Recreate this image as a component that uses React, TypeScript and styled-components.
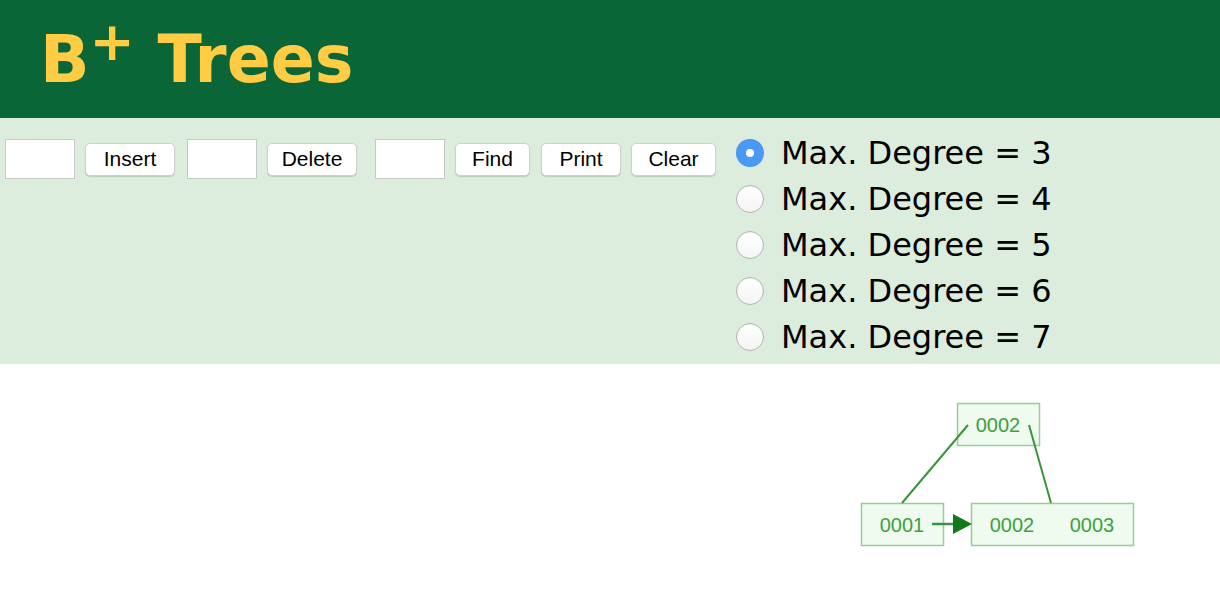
import React, { useState } from 'react';
import styled, { createGlobalStyle } from 'styled-components';

const GlobalStyle = createGlobalStyle`
    html, body {
        margin: 0;
        padding: 0;
        background: #ffffff;
    }
`;

const Page = styled.div`
    width: 1220px;
    font-family: 'DejaVu Sans', Verdana, sans-serif;
`;

const Header = styled.header`
    height: 118px;
    background: #0a6637;
    display: flex;
    align-items: center;
    padding-left: 40px;
`;

const Title = styled.h1`
    margin: 0;
    font-family: 'DejaVu Sans', Verdana, sans-serif;
    font-weight: bold;
    font-size: 65px;
    line-height: 1;
    color: #ffcc44;
    sup {
        font-size: 54px;
        line-height: 0;
        vertical-align: 22px;
    }
`;

const Panel = styled.section`
    background: #ddeddd;
    height: 246px;
    display: flex;
    align-items: flex-start;
    padding-left: 5px;
`;

const Controls = styled.div`
    display: flex;
    align-items: center;
    margin-top: 21px;
`;

const Field = styled.input`
    box-sizing: border-box;
    width: 70px;
    height: 40px;
    border: 1px solid #c8c8c8;
    background: #fff;
    margin: 0 10px 0 0;
    padding: 0 4px;
    outline: none;
`;

const Button = styled.button<{ $width: number; $gap?: number }>`
    box-sizing: border-box;
    width: ${(p) => p.$width}px;
    height: 33px;
    padding: 0;
    margin: 0 ${(p) => p.$gap ?? 10}px 0 0;
    background: #fff;
    border: 1px solid #cfcfcf;
    border-radius: 5px;
    box-shadow: 0 1px 1px rgba(0, 0, 0, 0.15);
    font-family: 'Liberation Sans', Arial, sans-serif;
    font-size: 21px;
    color: #000;
    cursor: pointer;
`;

const Degrees = styled.div`
    display: flex;
    flex-direction: column;
    margin-left: 20px;
    margin-top: 12px;
`;

const DegreeRow = styled.label`
    display: flex;
    align-items: center;
    height: 46px;
    font-family: 'DejaVu Sans', Verdana, sans-serif;
    font-size: 32px;
    color: #000;
    cursor: pointer;
`;

const Radio = styled.input`
    appearance: none;
    box-sizing: border-box;
    width: 28px;
    height: 28px;
    margin: 0 17px 0 0;
    border-radius: 50%;
    border: 1px solid #b4b4b4;
    background: linear-gradient(#ffffff, #f4f4f4);
    box-shadow: inset 0 1px 1px rgba(0, 0, 0, 0.05);
    position: relative;
    cursor: pointer;
    &:checked {
        border: none;
        background: #4a9af5;
    }
    &:checked::after {
        content: '';
        position: absolute;
        left: 10px;
        top: 10px;
        width: 8px;
        height: 8px;
        border-radius: 50%;
        background: #fff;
    }
`;

const Canvas = styled.svg`
    display: block;
    width: 1220px;
    height: 238px;
`;

const NODE_FILL = '#eefbee';
const NODE_STROKE = '#99cc99';
const TEXT_GREEN = '#3f9f3f';
const EDGE = '#3a943a';

const TreeNode = ({ x, y, w, keys }: { x: number; y: number; w: number; keys: { x: number; k: string }[] }) => (
    <g>
        <rect x={x + 0.5} y={y + 0.5} width={w} height={42} fill={NODE_FILL} stroke={NODE_STROKE} strokeWidth={1.5} />
        {keys.map((item) => (
            <text
                key={item.k + item.x}
                x={item.x}
                y={y + 29}
                textAnchor="middle"
                fontFamily="'Liberation Sans', Arial, sans-serif"
                fontSize={20}
                fill={TEXT_GREEN}
            >
                {item.k}
            </text>
        ))}
    </g>
);

const App = () => {
    const [degree, setDegree] = useState(3);
    return (
        <Page>
            <GlobalStyle />
            <Header>
                <Title>
                    B<sup>+</sup> Trees
                </Title>
            </Header>
            <Panel>
                <Controls>
                    <Field type="text" />
                    <Button $width={90} $gap={12}>Insert</Button>
                    <Field type="text" />
                    <Button $width={90} $gap={18}>Delete</Button>
                    <Field type="text" />
                    <Button $width={75} $gap={11}>Find</Button>
                    <Button $width={80}>Print</Button>
                    <Button $width={85} $gap={0}>Clear</Button>
                </Controls>
                <Degrees>
                    {[3, 4, 5, 6, 7].map((d) => (
                        <DegreeRow key={d}>
                            <Radio type="radio" name="degree" checked={degree === d} onChange={() => setDegree(d)} />
                            Max. Degree = {d}
                        </DegreeRow>
                    ))}
                </Degrees>
            </Panel>
            <Canvas viewBox="0 0 1220 238">
                <TreeNode x={957} y={39} w={82} keys={[{ x: 998, k: '0002' }]} />
                <TreeNode x={861} y={139} w={82} keys={[{ x: 902, k: '0001' }]} />
                <TreeNode
                    x={971}
                    y={139}
                    w={162}
                    keys={[
                        { x: 1012, k: '0002' },
                        { x: 1092, k: '0003' },
                    ]}
                />
                <line x1={968} y1={61} x2={902} y2={139} stroke={EDGE} strokeWidth={2} />
                <line x1={1029} y1={61} x2={1051} y2={139} stroke={EDGE} strokeWidth={2} />
                <line x1={932} y1={160} x2={955} y2={160} stroke={EDGE} strokeWidth={2.5} />
                <path d="M953,150 L972,160 L953,170 z" fill="#0f7a1a" />
            </Canvas>
        </Page>
    );
};

export default App;
